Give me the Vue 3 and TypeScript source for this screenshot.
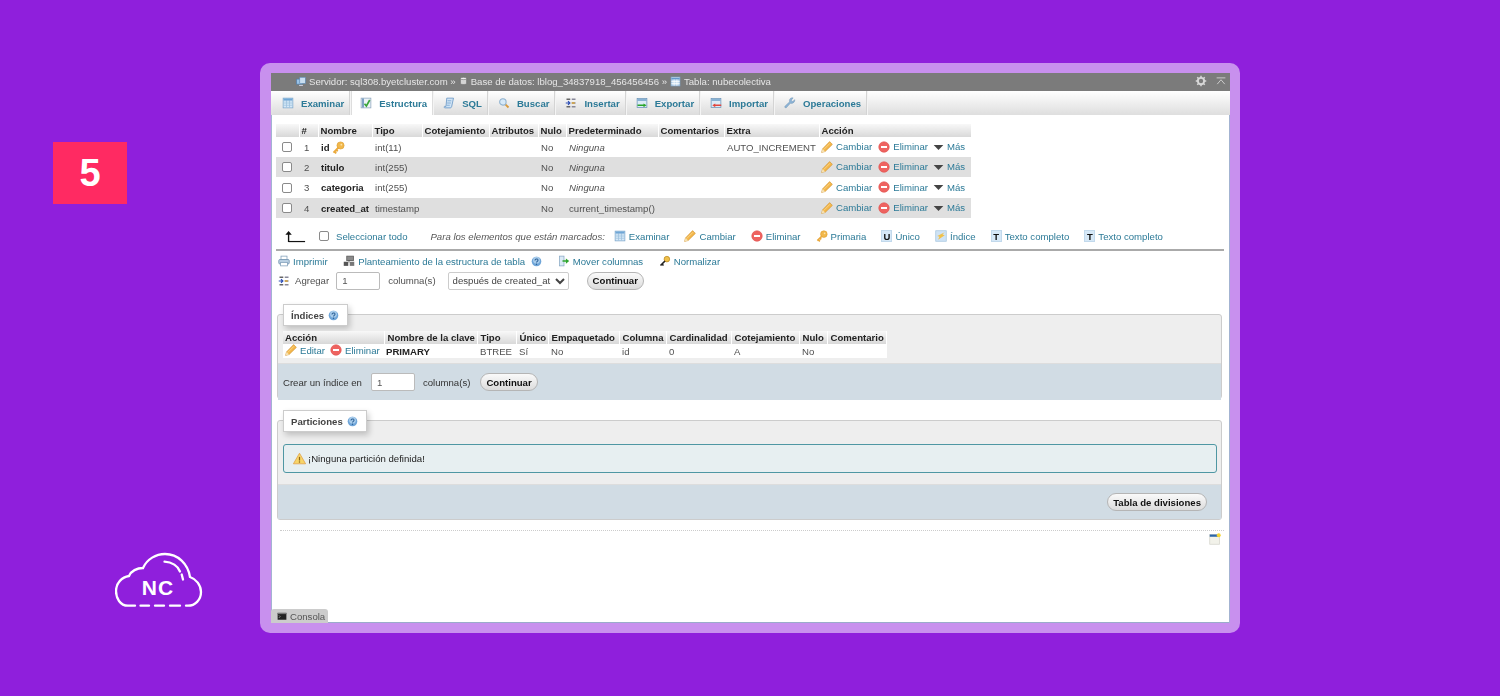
<script setup lang="ts">
const tabs = [
  { n: 'browse', t: 'Examinar' },
  { n: 'struct', t: 'Estructura', on: true },
  { n: 'sql', t: 'SQL' },
  { n: 'search', t: 'Buscar' },
  { n: 'insert', t: 'Insertar' },
  { n: 'export', t: 'Exportar' },
  { n: 'import', t: 'Importar' },
  { n: 'ops', t: 'Operaciones' },
]
const colWidths = [23, 19, 54, 50, 67, 49, 28, 92, 66, 95, 152]
const headers = ['', '#', 'Nombre', 'Tipo', 'Cotejamiento', 'Atributos', 'Nulo', 'Predeterminado', 'Comentarios', 'Extra', 'Acción']
const rows = [
  { i: 1, name: 'id', key: true, type: 'int(11)', def: 'Ninguna', it: true, extra: 'AUTO_INCREMENT', h: 20 },
  { i: 2, name: 'titulo', key: false, type: 'int(255)', def: 'Ninguna', it: true, extra: '', h: 20 },
  { i: 3, name: 'categoria', key: false, type: 'int(255)', def: 'Ninguna', it: true, extra: '', h: 21 },
  { i: 4, name: 'created_at', key: false, type: 'timestamp', def: 'current_timestamp()', it: false, extra: '', h: 20 },
]
const bulk = [
  { n: 'browse', t: 'Examinar' },
  { n: 'pencil', t: 'Cambiar' },
  { n: 'drop', t: 'Eliminar' },
  { n: 'key', t: 'Primaria' },
  { g: 'U', t: 'Único' },
  { n: 'index', t: 'Índice' },
  { g: 'T', t: 'Texto completo' },
  { g: 'T', t: 'Texto completo' },
]
const idxWidths = [101, 93, 39, 32, 71, 47, 65, 68, 28, 59]
const idxHeaders = ['Acción', 'Nombre de la clave', 'Tipo', 'Único', 'Empaquetado', 'Columna', 'Cardinalidad', 'Cotejamiento', 'Nulo', 'Comentario']
</script>

<template>
  <div class="page">
    <svg class="defs" aria-hidden="true">
      <symbol id="browse" viewBox="0 0 16 16"><rect x="1.5" y="1.5" width="13" height="13" fill="#d5e8f7" stroke="#7fa9cc"/><path d="M2 5h12M2 8h12M2 11h12M6 2v12M10 2v12" stroke="#9cc0de"/><rect x="2" y="2" width="12" height="2.5" fill="#6fa6d6"/></symbol>
      <symbol id="struct" viewBox="0 0 16 16"><rect x="1.5" y="1.5" width="13" height="13" fill="#eef3f8" stroke="#8aa5bd"/><path d="M4 2v12" stroke="#5b87b5" stroke-width="2"/><path d="M6 9l2.5 3L13 4" fill="none" stroke="#3aa63a" stroke-width="2.2"/></symbol>
      <symbol id="sql" viewBox="0 0 16 16"><path d="M5 1.500h9l-2.500 11.500c-.3 1.200-1 1.500-2 1.500H2.500c-1 0-1.300-1.300-.5-2h2z" fill="#cfe3f5" stroke="#5d8fc0"/><path d="M6 5h5M5.500 8h5M5 11h4" stroke="#6f9fcc"/></symbol>
      <symbol id="search" viewBox="0 0 16 16"><path d="M9.500 9.500l4.500 4.500" stroke="#d89a3c" stroke-width="2.400"/><circle cx="6.500" cy="6.500" r="4.300" fill="#d6e9f8" stroke="#8fb2cf" stroke-width="1.400"/></symbol>
      <symbol id="insert" viewBox="0 0 16 16"><path d="M2 2h5v2H2zM2 12h5v2H2z" fill="#666"/><path d="M1 8h5M4 5.500L6.500 8 4 10.500" fill="none" stroke="#2b4db5" stroke-width="1.600"/><path d="M9 2h5v2H9zM9 7h5v2H9zM9 12h5v2H9z" fill="#889"/><rect x="9" y="7" width="4" height="2" fill="#d9a53a"/></symbol>
      <symbol id="export" viewBox="0 0 16 16"><rect x="1.500" y="2" width="13" height="12" fill="#dcebf7" stroke="#6a93b8"/><path d="M2 3h12v2H2z" fill="#6d9fc9"/><path d="M2 11h9" stroke="#2aa52a" stroke-width="2"/><path d="M10 8.500l4 2.500-4 2.500z" fill="#2aa52a"/></symbol>
      <symbol id="import" viewBox="0 0 16 16"><rect x="1.500" y="2" width="13" height="12" fill="#dcebf7" stroke="#6a93b8"/><path d="M2 3h12v2H2z" fill="#6d9fc9"/><path d="M6 11h9" stroke="#e2453c" stroke-width="2"/><path d="M7 8.500l-4 2.500 4 2.500z" fill="#e2453c"/></symbol>
      <symbol id="ops" viewBox="0 0 16 16"><path d="M14.500 3.500l-3 2.500-1.800-1.800 2.500-3c-2.400-.7-5 .9-5 3.500 0 .7.100 1.200.3 1.700L1.500 12c-1 1-.5 2.500 1.300 2.500l5.800-6.200c2.900 1 6.200-1.500 5.900-4.800z" fill="#8db4d6" stroke="#6f93b3" stroke-width=".6"/></symbol>
      <symbol id="pencil" viewBox="0 0 16 16"><path d="M11.500.8l3.700 3.700L5.500 14 .8 15.200 2 10.500z" fill="#f3b64a" stroke="#cf9230" stroke-width=".8"/><path d="M2 10.500L5.500 14 .8 15.200z" fill="#f7e2b4"/><path d="M3.500 11.500l8.500-8.500" stroke="#fbdc9a"/></symbol>
      <symbol id="drop" viewBox="0 0 16 16"><circle cx="8" cy="8" r="7" fill="#ee6360" stroke="#e0524f" stroke-width=".8"/><path d="M4 8h8" stroke="#fff" stroke-width="2.600"/></symbol>
      <symbol id="more" viewBox="0 0 16 16"><path d="M1 5h14L8 12.500z" fill="#444"/></symbol>
      <symbol id="key" viewBox="0 0 16 16"><circle cx="10.500" cy="5.500" r="4.400" fill="#f2b84b" stroke="#dd9f32" stroke-width=".8"/><path d="M8 8l-6.200 6.200M3 13l2.200 2.200M5.200 10.800l1.800 1.800" stroke="#eaa93c" stroke-width="2.300"/><circle cx="11.500" cy="4.500" r="1.100" fill="#fbe3a8"/></symbol>
      <symbol id="index" viewBox="0 0 16 16"><rect x="1" y="1" width="14" height="14" fill="#cfe3f5" stroke="#a4c5e0"/><path d="M13 3L3 8l3 1-2 4 9-6-3-1z" fill="#f0c04a"/></symbol>
      <symbol id="print" viewBox="0 0 16 16"><rect x="4" y="1.500" width="8" height="5" fill="#fff" stroke="#7f9db8"/><rect x="1" y="6" width="14" height="6" rx="1.500" fill="#b9cfe2" stroke="#6e8fac"/><rect x="3.500" y="10" width="9" height="4.500" fill="#fff" stroke="#7f9db8"/></symbol>
      <symbol id="relation" viewBox="0 0 16 16"><rect x="5" y="1.500" width="9" height="6" fill="#8a8a8a" stroke="#555"/><rect x="1" y="9" width="6" height="5.500" fill="#555"/><rect x="9" y="9" width="6" height="5.500" fill="#777"/><path d="M8 7v3" stroke="#444"/></symbol>
      <symbol id="move" viewBox="0 0 16 16"><rect x="2" y="1.500" width="6" height="13" fill="#dcebf7" stroke="#88a8c4"/><path d="M6 8h6" stroke="#2fa52f" stroke-width="2"/><path d="M10.500 4.500L15 8l-4.500 3.500z" fill="#2fa52f"/></symbol>
      <symbol id="normalize" viewBox="0 0 16 16"><circle cx="10.500" cy="5.500" r="3.700" fill="#f0c04a" stroke="#b98a20"/><path d="M8 8l-6 6M4 12l2 2" stroke="#222" stroke-width="2.200"/></symbol>
      <symbol id="help" viewBox="0 0 16 16"><circle cx="8" cy="8" r="7" fill="#6fa5d8"/><circle cx="8" cy="6" r="5" fill="#a9cdec"/><path d="M5.800 6.500c0-3 4.400-3 4.400-.3 0 1.500-2.200 1.700-2.200 3.300" fill="none" stroke="#2a5f96" stroke-width="1.500"/><circle cx="8" cy="12" r="1" fill="#2a5f96"/></symbol>
      <symbol id="warn" viewBox="0 0 16 16"><path d="M8 1.500L15.500 14.500H.5z" fill="#f7d568" stroke="#e2a24a"/><path d="M8 6v4.500" stroke="#8a6416" stroke-width="1.500"/><circle cx="8" cy="12.300" r=".9" fill="#8a6416"/></symbol>
      <symbol id="console" viewBox="0 0 16 16"><rect x="1" y="3" width="14" height="11" fill="#222"/><rect x="1" y="3" width="14" height="2" fill="#777"/><path d="M3 7l2 2-2 2" fill="none" stroke="#ccc"/></symbol>
      <symbol id="gear" viewBox="0 0 16 16"><circle cx="8" cy="8" r="4.200" fill="none" stroke="#d8d8d8" stroke-width="2.600"/><path d="M8 1v3M8 12v3M1 8h3M12 8h3M3 3l2 2M11 11l2 2M13 3l-2 2M5 11l-2 2" stroke="#d8d8d8" stroke-width="2"/></symbol>
      <symbol id="collapse" viewBox="0 0 16 16"><path d="M1 3h14" stroke="#cfcfcf" stroke-width="1.500"/><path d="M2 13l6-7 6 7" fill="none" stroke="#cfcfcf" stroke-width="1.500"/></symbol>
      <symbol id="server" viewBox="0 0 16 16"><rect x="1" y="5" width="9" height="8" fill="#9cc3e6" stroke="#4f7fae"/><rect x="6" y="2" width="9" height="10" fill="#c9def0" stroke="#5a87b2"/><path d="M5 15h6" stroke="#dde" stroke-width="1.500"/></symbol>
      <symbol id="db" viewBox="0 0 16 16"><path d="M2.500 3.500v9c0 2.300 11 2.300 11 0v-9z" fill="#d4d4d4" stroke="#666"/><ellipse cx="8" cy="3.500" rx="5.500" ry="2" fill="#f0f0f0" stroke="#666"/></symbol>
      <symbol id="table" viewBox="0 0 16 16"><rect x="1.500" y="1.500" width="13" height="13" fill="#c5dcf0" stroke="#7ca2c6"/><path d="M2 3h12v2H2z" fill="#5f97cb"/><path d="M2 8h12M2 11h12M6 5v9M10 5v9" stroke="#fff"/></symbol>
      <symbol id="pageset" viewBox="0 0 16 16"><rect x="1" y="2" width="13" height="13" fill="#f2f2ea" stroke="#d5d5cc"/><rect x="1" y="2" width="13" height="3" fill="#2a64a8"/><circle cx="13" cy="3" r="2.600" fill="#f4d534"/></symbol>
      <symbol id="arrow" viewBox="0 0 24 14"><path d="M5 13V3" stroke="#111" stroke-width="1.500"/><path d="M1.500 5L5 1l3.500 4z" fill="#111"/><path d="M5 12.500h18" stroke="#111" stroke-width="1.300"/></symbol>
    </svg>

    <aside class="side">
      <div class="badge">5</div>
      <svg class="logo" viewBox="15 12 88 56" fill="none" stroke="#fff" stroke-width="2.300" stroke-linecap="round">
        <path d="M35 65.700H28C20 65.700 16 58 16 51C16 43 22 37 29 36C31 31 37 28 43 28C47 19 56 14 65 14C78 14 88 24 90 37C96 39 101 45 101 52C101 60 95 65.700 88 65.700H86" />
        <path d="M40.500 65.700H49M55 65.700H64M70 65.700H80" />
        <path d="M64.500 21.700C72 22 78 26 80 31.500M81.700 34.500L83 39.500" />
        <text class="logo-text" x="58" y="55" text-anchor="middle">NC</text>
      </svg>
    </aside>

    <main class="frame">
      <div class="screen">
        <header class="topbar">
          <svg class="ic srv"><use href="#server" /></svg>
          <span>Servidor: sql308.byetcluster.com »</span>
          <svg class="ic sm"><use href="#db" /></svg>
          <span>Base de datos: lblog_34837918_456456456 »</span>
          <svg class="ic tb"><use href="#table" /></svg>
          <span>Tabla: nubecolectiva</span>
          <span class="top-tools">
            <svg class="ic"><use href="#gear" /></svg>
            <svg class="ic srv"><use href="#collapse" /></svg>
          </span>
        </header>

        <nav class="tabs">
          <a v-for="tab in tabs" :key="tab.t" class="tab" :class="{ on: tab.on }">
            <svg class="ic tabic"><use :href="'#' + tab.n" /></svg>{{ tab.t }}
          </a>
        </nav>

        <table class="cols">
          <colgroup><col v-for="(w, i) in colWidths" :key="i" :style="{ width: w + 'px' }" /></colgroup>
          <thead>
            <tr><th v-for="(h, i) in headers" :key="i">{{ h }}</th></tr>
          </thead>
          <tbody>
            <tr v-for="r in rows" :key="r.i" :style="{ height: r.h + 'px' }">
              <td class="ck"><span class="box"></span></td>
              <td class="num">{{ r.i }}</td>
              <td class="name">{{ r.name }}<svg v-if="r.key" class="ic keyic"><use href="#key" /></svg></td>
              <td>{{ r.type }}</td>
              <td></td>
              <td></td>
              <td>No</td>
              <td :class="{ ital: r.it }">{{ r.def }}</td>
              <td></td>
              <td>{{ r.extra }}</td>
              <td class="acts">
                <a><svg class="ic"><use href="#pencil" /></svg>Cambiar</a>
                <a><svg class="ic"><use href="#drop" /></svg>Eliminar</a>
                <a><svg class="ic"><use href="#more" /></svg>Más</a>
              </td>
            </tr>
          </tbody>
        </table>

        <div class="bulk">
          <svg class="arrow"><use href="#arrow" /></svg>
          <span class="box"></span>
          <a class="all">Seleccionar todo</a>
          <em class="marked">Para los elementos que están marcados:</em>
          <a v-for="(b, i) in bulk" :key="i" class="lnk">
            <span v-if="b.g" class="glyph">{{ b.g }}</span>
            <svg v-else class="ic"><use :href="'#' + b.n" /></svg>{{ b.t }}
          </a>
        </div>
        <div class="rule"></div>

        <div class="links">
          <a class="lnk"><svg class="ic"><use href="#print" /></svg>Imprimir</a>
          <a class="lnk"><svg class="ic"><use href="#relation" /></svg>Planteamiento de la estructura de tabla<svg class="ic help"><use href="#help" /></svg></a>
          <a class="lnk"><svg class="ic"><use href="#move" /></svg>Mover columnas</a>
          <a class="lnk"><svg class="ic"><use href="#normalize" /></svg>Normalizar</a>
        </div>

        <div class="addrow">
          <svg class="ic"><use href="#insert" /></svg>
          <span class="lbl-add">Agregar</span>
          <input class="num-in" value="1" />
          <span class="lbl-col">columna(s)</span>
          <select class="sel"><option>después de created_at</option></select>
          <button class="btn btn-add">Continuar</button>
        </div>

        <section class="fs fs-idx">
          <div class="legend">Índices<svg class="ic help"><use href="#help" /></svg></div>
          <table class="idx">
            <colgroup><col v-for="(w, i) in idxWidths" :key="i" :style="{ width: w + 'px' }" /></colgroup>
            <thead><tr><th v-for="h in idxHeaders" :key="h">{{ h }}</th></tr></thead>
            <tbody>
              <tr>
                <td class="acts idx-acts">
                  <a><svg class="ic"><use href="#pencil" /></svg>Editar</a>
                  <a><svg class="ic"><use href="#drop" /></svg>Eliminar</a>
                </td>
                <td class="name">PRIMARY</td>
                <td>BTREE</td>
                <td>Sí</td>
                <td>No</td>
                <td>id</td>
                <td>0</td>
                <td>A</td>
                <td>No</td>
                <td></td>
              </tr>
            </tbody>
          </table>
          <div class="fs-foot idx-foot">
            <span class="dark">Crear un índice en</span>
            <input class="num-in" value="1" />
            <span class="dark">columna(s)</span>
            <button class="btn">Continuar</button>
          </div>
        </section>

        <section class="fs fs-part">
          <div class="legend">Particiones<svg class="ic help"><use href="#help" /></svg></div>
          <div class="notice"><svg class="ic warn"><use href="#warn" /></svg>¡Ninguna partición definida!</div>
          <div class="fs-foot part-foot"><button class="btn">Tabla de divisiones</button></div>
        </section>

        <div class="dotted"></div>
        <div class="pageset"><svg class="ic"><use href="#pageset" /></svg></div>

        <div class="console"><svg class="ic con"><use href="#console" /></svg>Consola</div>
      </div>
    </main>
  </div>
</template>

<style scoped>
.page {
  width: 1500px;
  height: 696px;
  box-sizing: border-box;
  padding: 63px 0 0 53px;
  background: #8f1fdc;
  display: flex;
  overflow: hidden;
  font-family: "Liberation Sans", Arial, sans-serif;
}
.defs { width: 0; height: 0; flex: none; }
.side { width: 149px; margin-right: 58px; flex: none; display: flex; flex-direction: column; }
.badge {
  width: 74px; height: 62px; margin-top: 79px;
  background: #ff2a62; color: #fff;
  font-size: 38px; font-weight: 700;
  display: flex; align-items: center; justify-content: center;
}
.logo { width: 88px; height: 56px; margin: 348px 0 0 62px; }
.logo-text { font-family: "Liberation Sans", Arial, sans-serif; font-size: 21px; font-weight: 700; fill: #fff; stroke: none; letter-spacing: 1px; }

.frame {
  width: 980px; height: 570px; box-sizing: border-box;
  padding: 10px 10px 10px 11px;
  background: #c890ee; border-radius: 10px; flex: none;
}
.screen {
  position: relative;
  height: 550px;
  background: #fff;
  font-size: 9.6px;
  color: #505050;
  box-shadow: inset 1px 0 #a3b3d2, inset -1px 0 #a3b3d2, inset 0 -1px #9aabcb;
  filter: blur(0.3px);
}
.ic { width: 12px; height: 12px; flex: none; }
.ic.sm { width: 9px; height: 10px; }
.ic.srv { width: 10px; height: 10px; }
.ic.tb { width: 11px; height: 11px; }
a { color: #2c7a97; text-decoration: none; }

.topbar {
  height: 18px; background: #7b7b7b; color: #e6e6e6;
  display: flex; align-items: center; padding: 0 4px 2px 25px; gap: 3px;
  box-sizing: border-box;
}
.top-tools { margin-left: auto; display: flex; align-items: center; gap: 9px; }

.tabs {
  height: 24px; padding: 0 1px 0 2px; display: flex;
  background: linear-gradient(#fff, #dedede);
}
.tab {
  display: flex; align-items: center;
  padding: 0 6px 0 9px;
  font-weight: 700; font-size: 9.6px;
  border-right: 1px solid #f4f4f4;
  box-shadow: inset -1px 0 #d4d4d4;
  background: linear-gradient(#fff, #dcdcdc);
}
.tab.on { background: #fff; box-shadow: inset -1px 0 #ddd, inset 1px 0 #ddd; }
.tabic { margin-right: 7px; }

.cols { margin: 9px 0 0 5px; table-layout: fixed; width: 695px; border-collapse: collapse; }
.cols th, .idx th {
  height: 13px; padding: 0 0 0 2px; text-align: left; font-weight: 700; color: #222;
  background: linear-gradient(#f8f8f8, #d8d8d8);
  border-right: 1px solid #fff; white-space: nowrap; overflow: hidden;
}
.cols td, .idx td { padding: 0 0 0 3px; white-space: nowrap; overflow: hidden; }
.idx th:not(:first-child) { padding-left: 3px; }
.idx td.acts, .idx td.name { padding-left: 2px; }
.cols tbody tr:nth-child(even) { background: #dfdfdf; }
.ck { padding-left: 6px !important; }
.box {
  display: block; width: 10px; height: 10px; box-sizing: border-box;
  border: 1px solid #8a8a8a; border-radius: 2px; background: #fff;
}
.num { padding-left: 5px !important; }
.name { font-weight: 700; color: #222; }
.keyic { vertical-align: -3px; margin-left: 2px; width: 13px; height: 13px; }
.ital { font-style: italic; }
.acts a { display: inline-flex; align-items: center; margin-right: 6px; }
.acts .ic { margin-right: 3px; width: 12px; height: 12px; }
.cols .acts { padding-left: 2px; padding-top: 1px; }
.cols .acts a:last-child .ic { width: 11px; margin: 0 3px 0 -1px; }

.bulk { margin: 9px 0 0 13px; height: 18px; display: flex; align-items: center; gap: 14px; }
.arrow { width: 22px; height: 13px; flex: none; }
.bulk > .box { margin-left: -1px; }
.all { margin-left: -7px; }
.marked { margin-left: 9px; margin-right: -5px; color: #555; }
.lnk { display: inline-flex; align-items: center; }
.lnk + .lnk { margin-left: 1.100px; }
.lnk > .ic:first-child, .glyph { margin-right: 3px; }
.glyph {
  width: 11px; height: 12px; flex: none; box-sizing: border-box;
  display: flex; align-items: flex-end; justify-content: center;
  background: #d6e8f7; border: 1px solid #c2d9ec;
  color: #111; font-size: 9.500px; line-height: 9px; font-weight: 700;
}
.help { width: 11px; height: 11px; margin-left: 6px; }
.rule { height: 2px; margin: 4px 6px 0 5px; background: #aaa; }
.links { margin: 3px 0 0 7px; height: 14px; display: flex; align-items: center; gap: 14.500px; }
.addrow { margin: 3px 0 0 7px; height: 19px; display: flex; align-items: center; }
.lbl-add { margin-left: 5px; }
.num-in {
  width: 44px; height: 18px; box-sizing: border-box; padding: 0 5px;
  border: 1px solid #bbb; border-radius: 2px; background: #fff; color: #555;
  font: 9.6px "Liberation Sans", Arial, sans-serif; outline: none;
}
.addrow .num-in { margin-left: 7px; }
.lbl-col { margin-left: 8px; }
.sel {
  width: 121px; height: 18px; margin-left: 12px; box-sizing: border-box;
  border: 1px solid #ccc; border-radius: 2px; background: #fff; color: #444;
  font: 9.6px "Liberation Sans", Arial, sans-serif;
}
.btn {
  height: 18px; padding: 0 5px; box-sizing: border-box;
  border: 1px solid #b5b5b5; border-radius: 10px;
  background: linear-gradient(#fafafa, #dcdcdc);
  color: #111; font: 700 9.6px "Liberation Sans", Arial, sans-serif;
}
.btn-add { margin-left: 18px; }

.fs {
  margin-left: 6px; margin-right: 8px;
  background: #eee; border: 1px solid #ccc; border-radius: 3px; box-sizing: border-box;
}
.fs-idx { margin-top: 24px; height: 85px; }
.fs-part { margin-top: 21px; height: 100px; }
.legend {
  display: flex; align-items: center; width: fit-content; box-sizing: border-box;
  height: 22px; margin: -11px 0 0 5px; padding: 0 8px 0 7px;
  background: #fff; border: 1px solid #ccc; color: #444; font-weight: 700;
  box-shadow: 2px 3px 6px rgba(0, 0, 0, .2);
}
.legend .help { margin-left: 4px; }
.idx { margin: 5px 0 0 5px; table-layout: fixed; width: 603px; border-collapse: collapse; background: #fff; }
.idx tbody tr { height: 13px; }
.idx-acts a { margin-right: 5px; }
.fs-foot { background: #d1dce4; border-top: 1px solid #ddd; box-sizing: border-box; }
.idx-foot {
  height: 37px; margin-top: 5px; display: flex; align-items: center; padding-left: 5px;
}
.dark { color: #333; }
.idx-foot .num-in { margin: 0 8px 0 9px; }
.idx-foot .btn { margin-left: 10px; }
.notice {
  margin: 12px 4px 0 5px; height: 29px; box-sizing: border-box; padding-left: 9px;
  display: flex; align-items: center;
  background: #e7eff1; border: 1px solid #4f97a3; border-radius: 3px; color: #222;
}
.warn { width: 13px; height: 13px; margin-right: 2px; }
.part-foot {
  margin-top: 11px; height: 35px; display: flex; align-items: center; justify-content: flex-end; padding-right: 14px;
}
.dotted { margin: 10px 6px 0 9px; border-top: 1px dotted #ccc; }
.pageset { display: flex; justify-content: flex-end; padding: 2px 9px 0 0; }
.console {
  position: absolute; left: 0; bottom: 0; width: 57px; height: 14px; box-sizing: border-box;
  display: flex; align-items: center; padding-left: 6px;
  background: #ccc; color: #555; border-radius: 3px 3px 0 0;
}
.con { width: 10px; height: 10px; margin-right: 3px; }
</style>
